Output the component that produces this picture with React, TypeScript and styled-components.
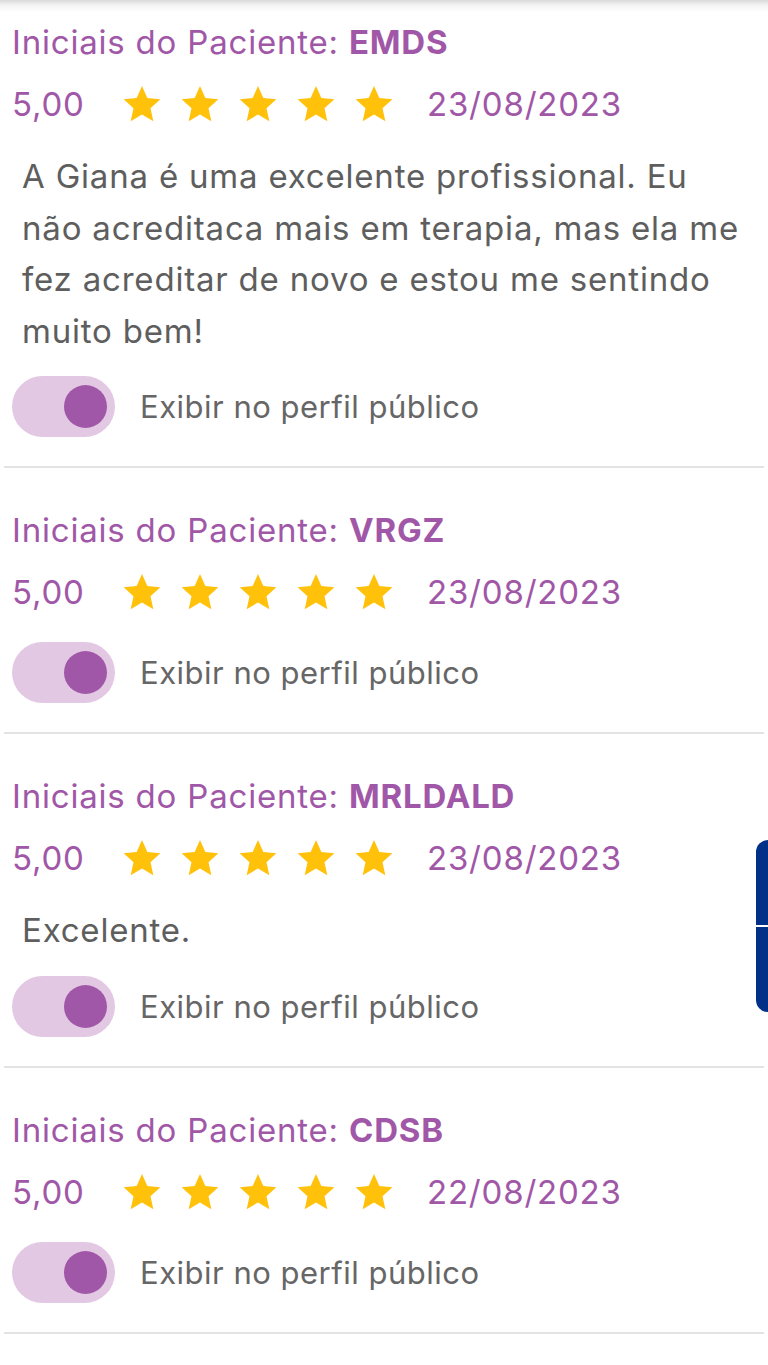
import styled, { createGlobalStyle } from 'styled-components';

const GlobalStyle = createGlobalStyle`
  body {
    margin: 0;
    background: #ffffff;
    font-family: Inter, "Noto Sans", sans-serif;
  }
`;

const purple = '#a157a7';

interface Review {
  initials: string;
  rating: string;
  date: string;
  comment?: string;
}

const reviews: Review[] = [
  {
    initials: 'EMDS',
    rating: '5,00',
    date: '23/08/2023',
    comment:
      'A Giana é uma excelente profissional. Eu não acreditaca mais em terapia, mas ela me fez acreditar de novo e estou me sentindo muito bem!',
  },
  { initials: 'VRGZ', rating: '5,00', date: '23/08/2023' },
  { initials: 'MRLDALD', rating: '5,00', date: '23/08/2023', comment: 'Excelente.' },
  { initials: 'CDSB', rating: '5,00', date: '22/08/2023' },
];

const Page = styled.div`
  position: relative;
  min-height: 1365px;
  padding: 0 4px;
  background: linear-gradient(#d9d9d9 0px, #f3f3f3 5px, #ffffff 12px);
`;

const Card = styled.section`
  display: flex;
  flex-direction: column;
  padding: 31px 8px 0;
  border-bottom: 2px solid #e3e3e3;

  &:first-child {
    padding-top: 11px;
  }
`;

const Title = styled.div`
  height: 62px;
  line-height: 62px;
  font-size: 33px;
  color: ${purple};
  letter-spacing: 0.8px;

  strong {
    font-weight: 700;
  }
`;

const RatingRow = styled.div`
  display: flex;
  align-items: center;
  height: 62px;
  font-size: 33px;
  letter-spacing: 0.8px;
  color: ${purple};
`;

const Score = styled.span`
  width: 110px;
`;

const Stars = styled.div`
  display: flex;
  gap: 18px;
  margin-right: 33px;
`;

const Comment = styled.p`
  margin: 16px 0 0;
  padding: 0 4px 0 10px;
  font-size: 33px;
  letter-spacing: 0.8px;
  line-height: 51.5px;
  color: #5e5e5e;
`;

const ToggleRow = styled.div`
  display: flex;
  align-items: center;
  gap: 25px;
  height: 61px;
  margin: 19px 0 29px;
  font-size: 31px;
  letter-spacing: 0.5px;
  color: #666666;
`;

const Track = styled.div`
  display: flex;
  align-items: center;
  justify-content: flex-end;
  width: 103px;
  height: 61px;
  padding: 0 8px;
  box-sizing: border-box;
  border-radius: 31px;
  background: #e3c8e3;
`;

const Thumb = styled.div`
  width: 43px;
  height: 43px;
  border-radius: 50%;
  background: ${purple};
`;

const SideTab = styled.div`
  position: absolute;
  right: 0;
  top: 840px;
  width: 12px;
  height: 172px;
  display: flex;
  flex-direction: column;
  gap: 2px;
  border-radius: 12px 0 0 12px;
  overflow: hidden;
`;

const TabPart = styled.div`
  flex: 1;
  background: #003087;
`;

function Star() {
  return (
    <svg width="40" height="40" viewBox="0 0 24 24">
      <path
        fill="#ffc10a"
        d="M12 1.2l3.2 7.2 7.8.8-5.9 5.3 1.7 7.8L12 18.3l-6.8 4 1.7-7.8L1 9.2l7.8-.8z"
      />
    </svg>
  );
}

function ReviewCard({ review }: { review: Review }) {
  return (
    <Card>
      <Title>
        Iniciais do Paciente: <strong>{review.initials}</strong>
      </Title>
      <RatingRow>
        <Score>{review.rating}</Score>
        <Stars>
          {[0, 1, 2, 3, 4].map((i) => (
            <Star key={i} />
          ))}
        </Stars>
        <span>{review.date}</span>
      </RatingRow>
      {review.comment && <Comment>{review.comment}</Comment>}
      <ToggleRow>
        <Track>
          <Thumb />
        </Track>
        Exibir no perfil público
      </ToggleRow>
    </Card>
  );
}

export default function App() {
  return (
    <>
      <GlobalStyle />
      <Page>
        {reviews.map((r) => (
          <ReviewCard key={r.initials} review={r} />
        ))}
        <SideTab>
          <TabPart />
          <TabPart />
        </SideTab>
      </Page>
    </>
  );
}
